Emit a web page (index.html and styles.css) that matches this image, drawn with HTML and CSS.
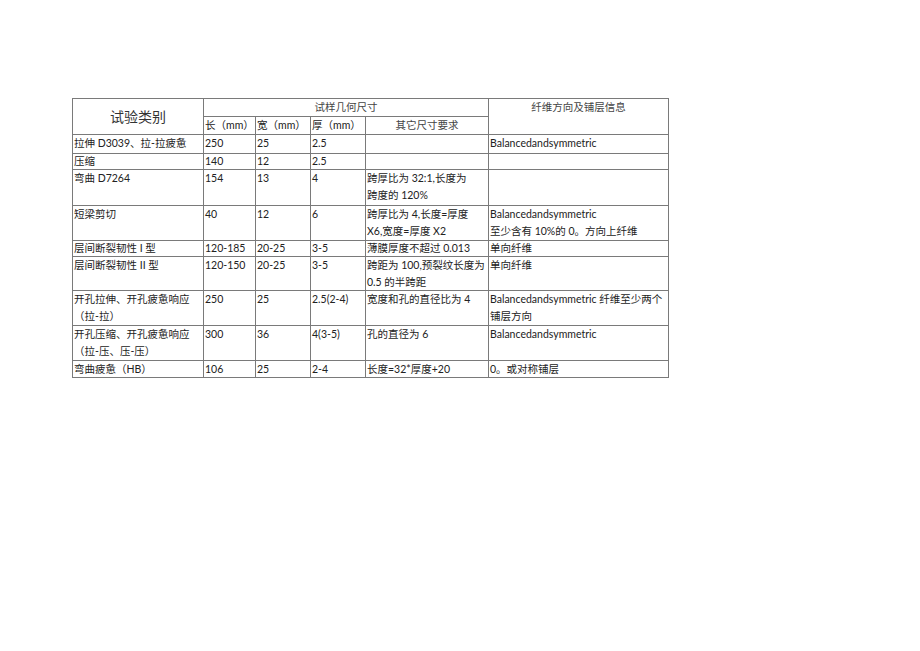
FILE: index.html
```html
<!DOCTYPE html>
<html lang="zh">
<head>
<meta charset="utf-8">
<title>试验类别</title>
<link rel="stylesheet" href="styles.css">
</head>
<body>
<div class="page">
<table class="spec">
  <colgroup>
    <col class="c1"><col class="c2"><col class="c3"><col class="c4"><col class="c5"><col class="c6">
  </colgroup>
  <tr class="h1">
    <td rowspan="2" class="title">试验类别</td>
    <td colspan="4" class="center">试样几何尺寸</td>
    <td rowspan="2" class="center">纤维方向及铺层信息</td>
  </tr>
  <tr class="h2">
    <td>长（mm）</td>
    <td>宽（mm）</td>
    <td>厚（mm）</td>
    <td class="center">其它尺寸要求</td>
  </tr>
  <tr class="r1">
    <td>拉伸 D3039、拉-拉疲惫</td><td>250</td><td>25</td><td>2.5</td><td></td><td>Balancedandsymmetric</td>
  </tr>
  <tr class="r2">
    <td>压缩</td><td>140</td><td>12</td><td>2.5</td><td></td><td></td>
  </tr>
  <tr class="r3">
    <td>弯曲 D7264</td><td>154</td><td>13</td><td>4</td><td>跨厚比为 32:1,长度为<br>跨度的 120%</td><td></td>
  </tr>
  <tr class="r4">
    <td>短梁剪切</td><td>40</td><td>12</td><td>6</td><td>跨厚比为 4,长度=厚度<br>X6,宽度=厚度 X2</td><td>Balancedandsymmetric<br>至少含有 10%的 0。方向上纤维</td>
  </tr>
  <tr class="r5">
    <td>层间断裂韧性 I 型</td><td>120-185</td><td>20-25</td><td>3-5</td><td>薄膜厚度不超过 0.013</td><td>单向纤维</td>
  </tr>
  <tr class="r6">
    <td>层间断裂韧性 II 型</td><td>120-150</td><td>20-25</td><td>3-5</td><td>跨距为 100,预裂纹长度为<br>0.5 的半跨距</td><td>单向纤维</td>
  </tr>
  <tr class="r7">
    <td>开孔拉伸、开孔疲惫响应<br>（拉-拉）</td><td>250</td><td>25</td><td>2.5(2-4)</td><td>宽度和孔的直径比为 4</td><td>Balancedandsymmetric 纤维至少两个<br>铺层方向</td>
  </tr>
  <tr class="r8">
    <td>开孔压缩、开孔疲惫响应<br>（拉-压、压-压）</td><td>300</td><td>36</td><td>4(3-5)</td><td>孔的直径为 6</td><td>Balancedandsymmetric</td>
  </tr>
  <tr class="r9">
    <td>弯曲疲惫（HB）</td><td>106</td><td>25</td><td>2-4</td><td>长度=32*厚度+20</td><td>0。或对称铺层</td>
  </tr>
</table>
</div>
</body>
</html>
```

FILE: styles.css
```css
html, body {
  margin: 0;
  padding: 0;
  background: #ffffff;
}

.page {
  padding: 98px 0 0 72px;
}

.spec {
  border-collapse: collapse;
  table-layout: fixed;
  width: 597px;
  font-family: "Lato", "Noto Sans CJK SC", sans-serif;
  font-size: 10.5px;
  color: #222;
}

.c1 { width: 131px; }
.c2 { width: 52px; }
.c3 { width: 55px; }
.c4 { width: 55px; }
.c5 { width: 123px; }
.c6 { width: 180px; }

.spec td {
  border: 1px solid #7a7a7a;
  padding: 0 1px;
  vertical-align: top;
  line-height: 17px;
  white-space: nowrap;
  overflow: hidden;
}

.spec .center {
  text-align: center;
  color: #444;
}

.spec .title {
  text-align: center;
  vertical-align: middle;
  font-size: 14px;
  line-height: 17px;
  color: #333;
}

.h1 td { height: 17px; }
.h2 td { height: 17px; }
.r1 td { height: 18px; }
.r2 td { height: 15px; line-height: 15px; }
.r3 td { height: 35px; }
.r4 td { height: 34px; }
.r5 td { height: 15px; line-height: 15px; }
.r6 td { height: 33px; line-height: 16.5px; }
.r7 td { height: 34px; }
.r8 td { height: 34px; }
.r9 td { height: 16px; line-height: 16px; }
```
